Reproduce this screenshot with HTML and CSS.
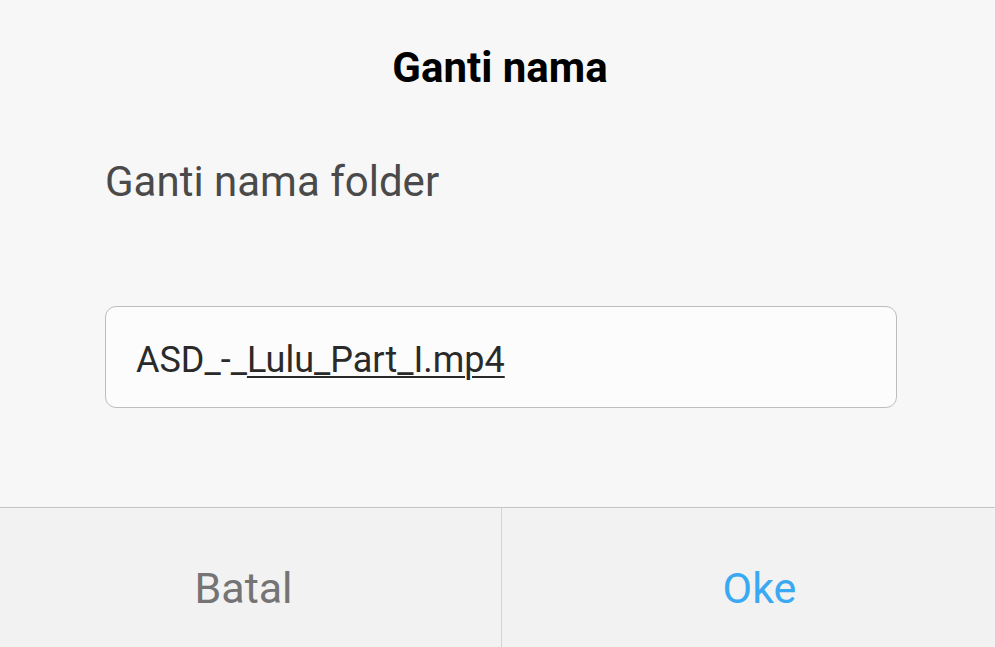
FILE: index.html
```html
<!DOCTYPE html>
<html lang="id">
<head>
<meta charset="utf-8">
<title>Ganti nama</title>
<link rel="stylesheet" href="styles.css">
</head>
<body>
<div class="dialog">
  <div class="content">
    <h1 class="title">Ganti nama</h1>
    <p class="message">Ganti nama folder</p>
    <div class="field"><span class="pre">ASD_-_</span><span class="sel">Lulu_Part_I.mp4</span></div>
  </div>
  <div class="actions">
    <button class="btn cancel"><span>Batal</span></button>
    <button class="btn ok"><span>Oke</span></button>
  </div>
</div>
</body>
</html>
```
FILE: styles.css
```css
* { box-sizing: border-box; }
html, body { margin: 0; padding: 0; height: 100%; }
body {
  background: #f7f7f7;
  font-family: Roboto, "Noto Sans", sans-serif;
}
.dialog {
  width: 995px;
  height: 647px;
  display: flex;
  flex-direction: column;
}
.content {
  flex: 1;
  padding: 0 98px 0 105px;
  display: flex;
  flex-direction: column;
}
.title {
  margin: 44px 0 0;
  text-align: center;
  font-size: 42px;
  font-weight: 700;
  color: #000;
  line-height: 48px;
  padding-right: 2px;
}
.message {
  margin: 66px 0 0 0;
  font-size: 42px;
  line-height: 48px;
  color: #4a4a4a;
}
.field {
  margin-top: 100px;
  height: 102px;
  border: 1px solid #bdbdbd;
  border-radius: 11px;
  background: #fcfcfc;
  padding: 6px 30px 0;
  display: flex;
  align-items: center;
  font-size: 36px;
  color: #2a2a2a;
}
.sel { text-decoration: underline; text-decoration-thickness: 2px; text-underline-offset: 4px; }
.actions {
  height: 140px;
  display: flex;
  border-top: 1px solid #c4c4c4;
  background: #f2f2f2;
}
.btn {
  border: 0;
  background: transparent;
  font-family: Roboto, "Noto Sans", sans-serif;
  font-size: 43px;
  padding: 20px 0 0;
  display: flex;
  align-items: center;
  justify-content: center;
}
.cancel { width: 502px; color: #747474; border-right: 1px solid #d4d4d4; padding-right: 14px; }
.ok { flex: 1; color: #3ba9f2; padding-left: 22px; }
```
